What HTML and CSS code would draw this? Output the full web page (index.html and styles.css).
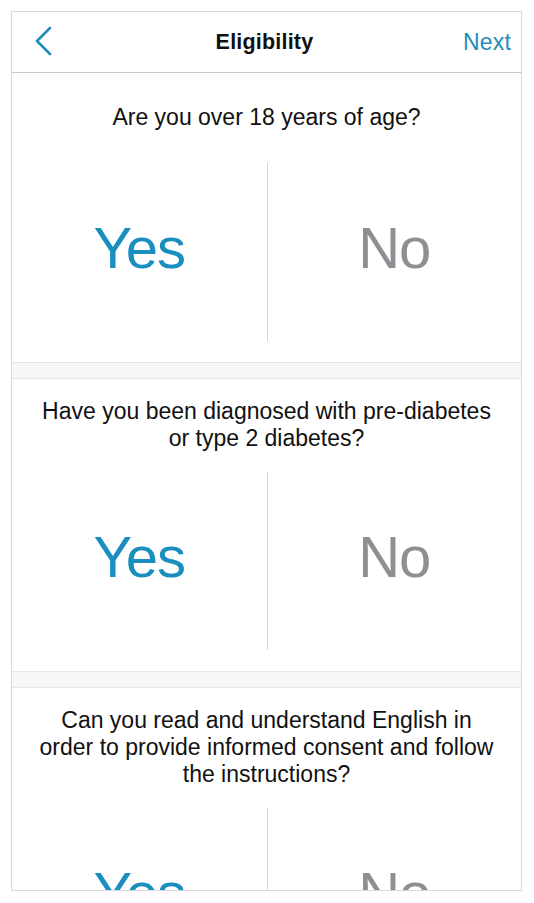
FILE: index.html
```html
<!DOCTYPE html>
<html lang="en">
<head>
<meta charset="utf-8">
<title>Eligibility</title>
<link rel="stylesheet" href="styles.css">
</head>
<body>
<div class="frame">
  <header class="nav">
    <button class="back" aria-label="Back">
      <svg width="20" height="30" viewBox="0 0 20 30"><path d="M17 2 L4 15 L17 28" fill="none" stroke="#1f8db7" stroke-width="2.6" stroke-linecap="round" stroke-linejoin="round"/></svg>
    </button>
    <h1 class="title">Eligibility</h1>
    <a class="next">Next</a>
  </header>
  <section class="card">
    <div class="question">Are you over 18 years of age?</div>
    <div class="answers">
      <div class="answer yes">Yes</div>
      <div class="answer no">No</div>
    </div>
  </section>
  <div class="band"></div>
  <section class="card">
    <div class="question">Have you been diagnosed with pre-diabetes<br>or type 2 diabetes?</div>
    <div class="answers">
      <div class="answer yes">Yes</div>
      <div class="answer no">No</div>
    </div>
  </section>
  <div class="band"></div>
  <section class="card">
    <div class="question">Can you read and understand English in<br>order to provide informed consent and follow<br>the instructions?</div>
    <div class="answers">
      <div class="answer yes">Yes</div>
      <div class="answer no">No</div>
    </div>
  </section>
</div>
</body>
</html>
```
FILE: styles.css
```css
* { box-sizing: border-box; }
html, body { margin: 0; padding: 0; background: #fff; }
body { font-family: "Liberation Sans", Arial, sans-serif; color: #111; }
.frame {
  margin: 11px 0 0 11px;
  width: 511px;
  height: 880px;
  border: 1px solid #d9d9d9;
  overflow: hidden;
  background: #fff;
}
.nav {
  height: 61px;
  border-bottom: 1px solid #c8c8c8;
  display: grid;
  grid-template-columns: 1fr auto 1fr;
  align-items: center;
  padding: 0 10px;
}
.back {
  justify-self: start;
  background: none;
  border: 0;
  padding: 0;
  display: flex;
  margin: -2px 0 0 11px;
}
.title {
  margin: 0 0 0 -4px;
  font-size: 21.5px;
  font-weight: bold;
  color: #111;
  letter-spacing: 0.2px;
}
.next {
  justify-self: end;
  font-size: 23px;
  color: #1f8db7;
  letter-spacing: 0.2px;
}
.card { padding-bottom: 21px; }
.question {
  min-height: 90px;
  padding: 19px 10px 20px;
  display: flex;
  align-items: center;
  justify-content: center;
  text-align: center;
  font-size: 23px;
  line-height: 27px;
  color: #111;
}
.answers {
  height: 178px;
  display: grid;
  grid-template-columns: 1fr 1fr;
}
.answer {
  display: flex;
  align-items: center;
  justify-content: center;
  font-size: 58px;
  letter-spacing: -1px;
  padding-bottom: 9px;
}
.yes { color: #1a8fbf; }
.no { color: #8e8e93; border-left: 1px solid #d4d4d4; }
.band {
  height: 17px;
  background: #f7f7f7;
  border-top: 1px solid #e6e6e6;
  border-bottom: 1px solid #e6e6e6;
}
```
